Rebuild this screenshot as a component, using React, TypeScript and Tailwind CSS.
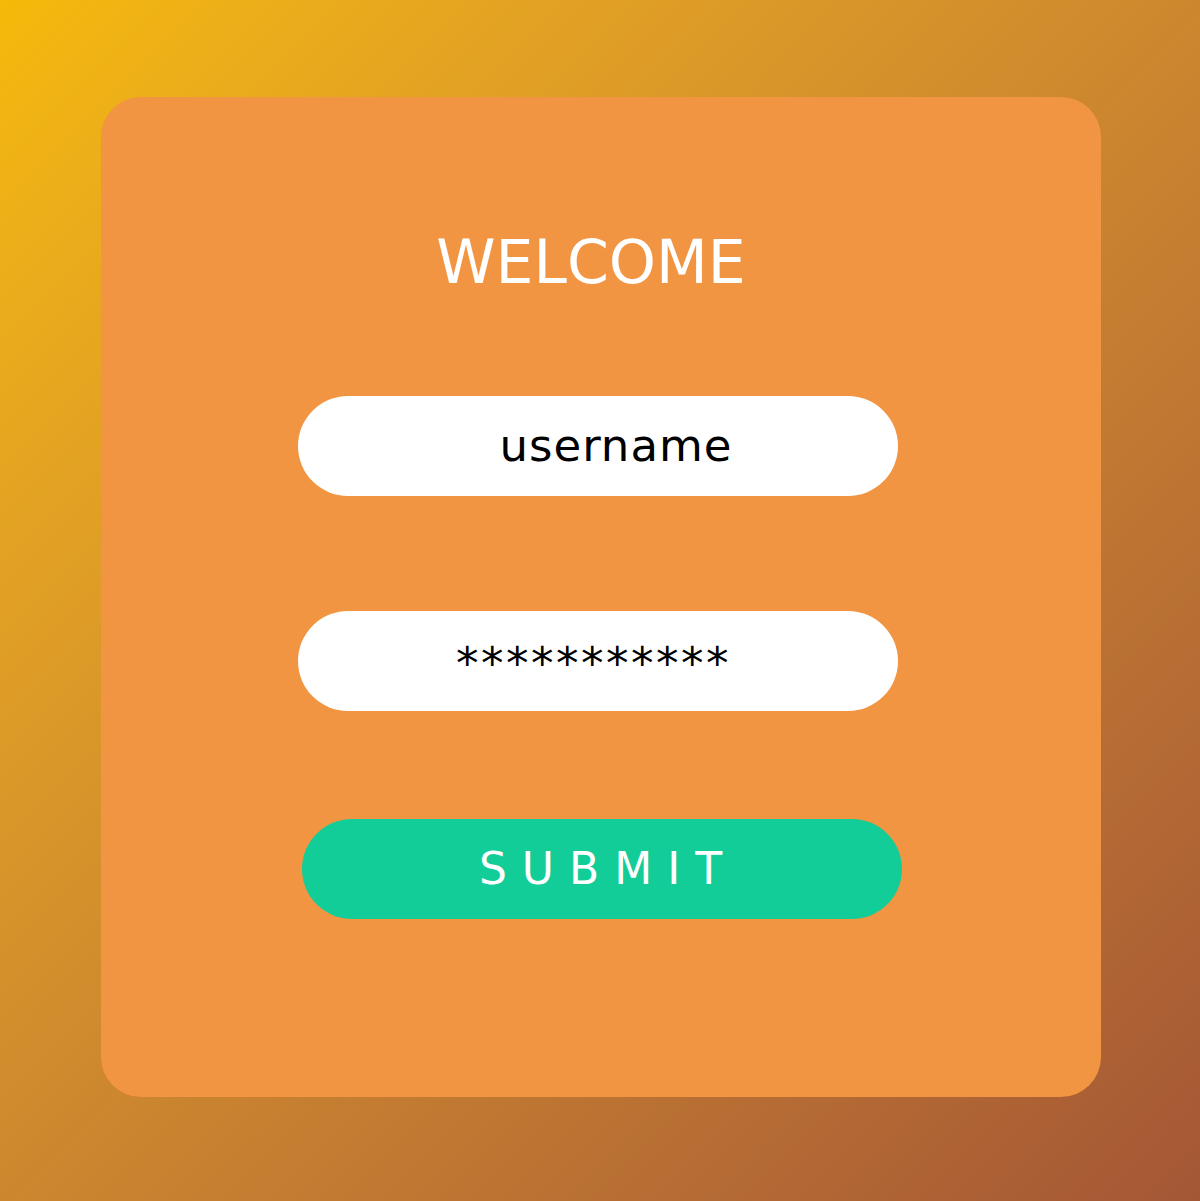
import React from "react";

export default function App() {
  return (
    <div
      className="w-full h-[1201px] bg-gradient-to-br from-[#f5b909] to-[#a45735] pt-[97px] pl-[101px]"
      style={{ fontFamily: '"DejaVu Sans", Verdana, sans-serif' }}
    >
      <div className="w-[1000px] h-[1000px] rounded-[40px] bg-[#f29542] flex flex-col">
        <div className="mt-[135px] h-[60px] leading-[60px] text-[60px] text-white text-center pr-[20px]">
          WELCOME
        </div>
        <div className="mt-[104px] ml-[197px] w-[600px] h-[100px] rounded-full bg-white flex items-center justify-center pl-[36px] text-[45px] tracking-[1px] text-black">
          username
        </div>
        <div className="mt-[115px] ml-[197px] w-[600px] h-[100px] rounded-full bg-white flex items-center justify-center pt-[6px] pr-[9px] text-[45px] tracking-[2.5px] text-black">
          ***********
        </div>
        <div className="mt-[108px] ml-[201px] w-[600px] h-[100px] rounded-full bg-[#13cd99] flex items-center justify-center pl-[12px] text-[44px] tracking-[15px] text-white">
          SUBMIT
        </div>
      </div>
    </div>
  );
}
